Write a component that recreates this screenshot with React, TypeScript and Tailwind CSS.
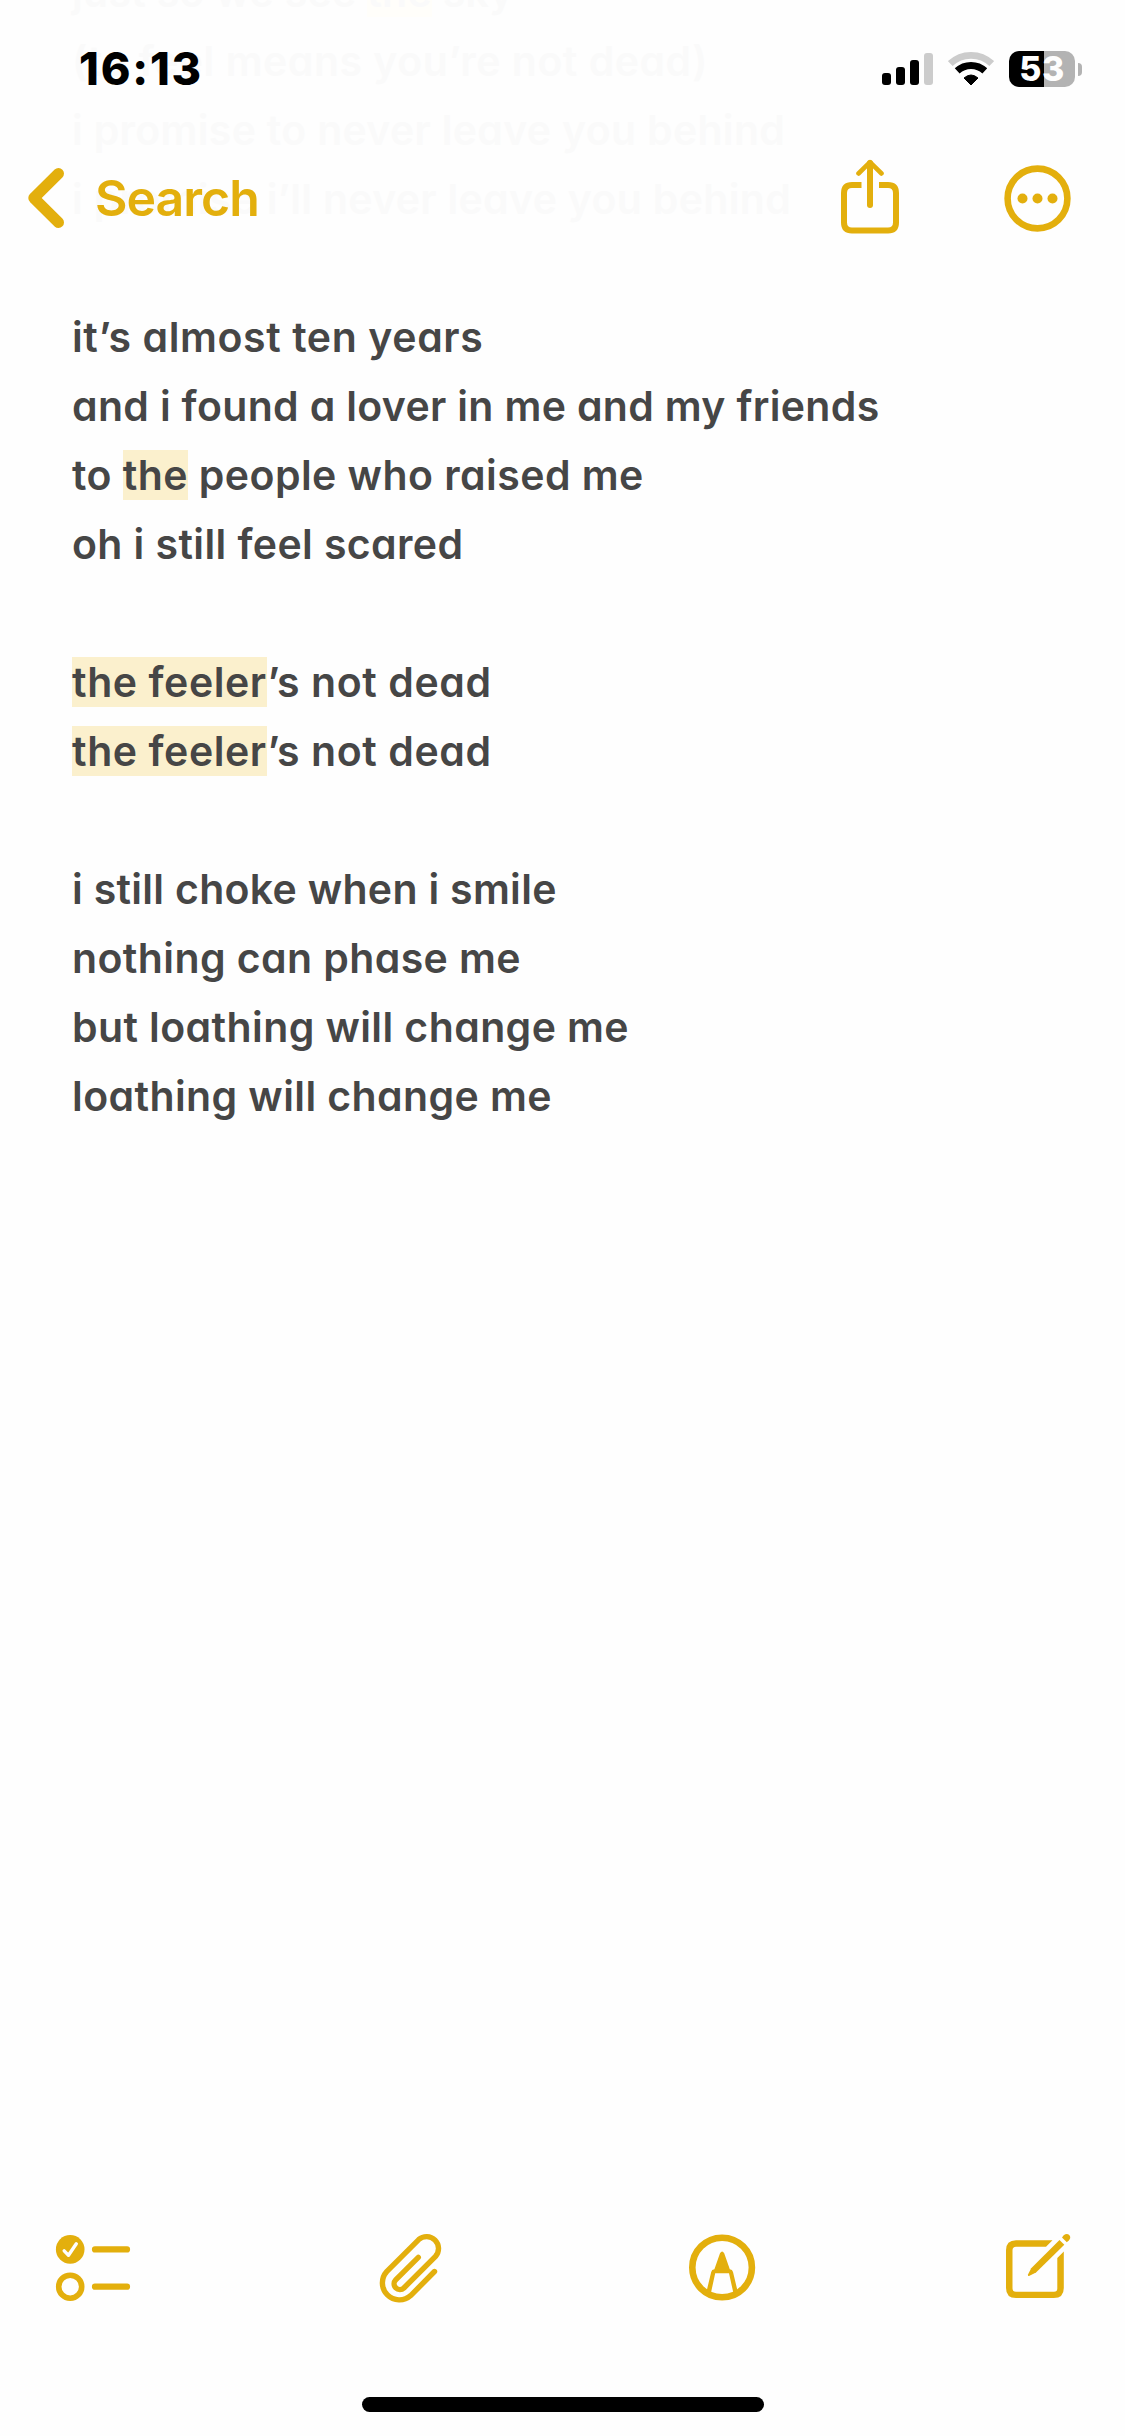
import type { ReactNode } from "react";
import { clsx } from "clsx";

type Segment = string | { mark: string };

type Line = {
  segments: Segment[];
  faded?: boolean;
  tracking?: string;
};

const LINES: Line[] = [
  { segments: ["just so we see ", { mark: "the" }, " sky"], faded: true, tracking: "tracking-[0.3px]" },
  { segments: ["(to feel means you’re not dead)"], faded: true, tracking: "tracking-[0.5px]" },
  { segments: ["i promise to never leave you behind"], faded: true, tracking: "tracking-[0.31px]" },
  { segments: ["i promise i’ll never leave you behind"], faded: true, tracking: "tracking-[0.31px]" },
  { segments: [] },
  { segments: ["it’s almost ten years"], tracking: "tracking-[0.6px]" },
  { segments: ["and i found a lover in me and my friends"], tracking: "tracking-[0.33px]" },
  { segments: ["to ", { mark: "the" }, " people who raised me"], tracking: "tracking-[0.45px]" },
  { segments: ["oh i still feel scared"] },
  { segments: [] },
  { segments: [{ mark: "the feeler" }, "’s not dead"], tracking: "tracking-[0.58px]" },
  { segments: [{ mark: "the feeler" }, "’s not dead"], tracking: "tracking-[0.58px]" },
  { segments: [] },
  { segments: ["i still choke when i smile"], tracking: "tracking-[0.3px]" },
  { segments: ["nothing can phase me"] },
  { segments: ["but loathing will change me"] },
  { segments: ["loathing will change me"] },
];

function NoteLine({ segments, faded, tracking }: Line) {
  return (
    <p
      className={clsx(
        "h-[69px] whitespace-pre",
        faded ? "text-[#fafafa]" : "text-[#464646]",
        tracking ?? "tracking-[0.4px]"
      )}
    >
      {segments.map((s, i) =>
        typeof s === "string" ? (
          <span key={i}>{s}</span>
        ) : (
          <mark key={i} className={clsx("text-inherit", faded ? "bg-[#fffefa]" : "bg-[#fbf0cd]")}>
            {s.mark}
          </mark>
        )
      )}
    </p>
  );
}

function StatusBar() {
  return (
    <div className="flex h-[138px] items-start justify-between pt-[42px] pr-[43px] pl-[79px]">
      <span className="text-[45px] leading-[54px] font-extrabold tracking-[1.8px] text-black">16:13</span>
      <div className="flex pt-[9px]">
        <svg width="51" height="36" viewBox="0 0 51 36" aria-label="Signal">
          <rect x="0" y="22" width="9" height="12" rx="3" />
          <rect x="14" y="16" width="9" height="18" rx="3" />
          <rect x="28" y="9" width="9" height="25" rx="3" />
          <rect x="42" y="2" width="9" height="32" rx="3" fill="#ccc" />
        </svg>
        <svg className="ml-[15px]" width="46" height="36" viewBox="0 0 46 36" fill="none" aria-label="Wi-Fi">
          <path d="M2.3 12.6A30 30 0 0 1 43.7 12.6" stroke="#ccc" strokeWidth="6.8" />
          <path d="M9.2 19.9A20 20 0 0 1 36.8 19.9" stroke="#000" strokeWidth="7" />
          <path d="M23 34 16 27Q23 21 30 27Z" fill="#000" stroke="#000" strokeWidth="1" strokeLinejoin="round" />
        </svg>
        <div className="ml-[15px] flex items-center">
          <div className="flex h-9 w-[66px] items-center justify-center rounded-[10px] bg-linear-to-r from-black from-[53%] to-[#b3b3b3] to-[53%] text-[34px] leading-9 font-extrabold tracking-[0.5px] text-[#fefefe]">
            53
          </div>
          <div className="ml-[3px] h-[13px] w-1 rounded-r-full bg-[#b3b3b3]" />
        </div>
      </div>
    </div>
  );
}

function NavBar() {
  return (
    <nav className="flex h-[120px] items-center pr-[54px] pl-7 text-[#e3af0d]">
      <button type="button" className="flex items-center">
        <svg width="36" height="60" viewBox="0 0 36 60" fill="none" stroke="currentColor" strokeWidth="11" strokeLinecap="round" strokeLinejoin="round">
          <path d="M30.5 5.5 5.8 30 30.5 54.5" />
        </svg>
        <span className="ml-[31px] text-[50px] leading-[60px] font-semibold tracking-[-1px]">Search</span>
      </button>
      <button type="button" aria-label="Share" className="-mt-[3px] ml-auto">
        <svg width="58" height="76" viewBox="0 0 58 76" fill="none" stroke="currentColor" strokeWidth="6">
          <path d="M20.5 26H11Q3 26 3 34V63.5Q3 71.5 11 71.5H47Q55 71.5 55 63.5V34Q55 26 47 26H38" />
          <path d="M29 4V46" strokeLinecap="round" />
          <path d="M17.5 14.5 29 3.2 40.5 14.5" strokeWidth="4.6" strokeLinecap="round" strokeLinejoin="round" />
        </svg>
      </button>
      <button type="button" aria-label="More" className="ml-[105px]">
        <svg width="67" height="67" viewBox="0 0 67 67">
          <circle cx="33.5" cy="33.5" r="29.9" fill="none" stroke="currentColor" strokeWidth="6.6" />
          <g fill="currentColor">
            <circle cx="18.5" cy="33.5" r="5" />
            <circle cx="33.5" cy="33.5" r="5" />
            <circle cx="48.5" cy="33.5" r="5" />
          </g>
        </svg>
      </button>
    </nav>
  );
}

function ToolButton({ label, width, children }: { label: string; width: number; children: ReactNode }) {
  return (
    <button type="button" aria-label={label}>
      <svg width={width} height="120" viewBox={`0 0 ${width} 120`} fill="none" stroke="currentColor">
        {children}
      </svg>
    </button>
  );
}

function Toolbar() {
  return (
    <div className="flex gap-[190px] pl-[30px] text-[#e3af0d]">
      <ToolButton label="Checklist" width={130}>
        <circle cx="40.2" cy="39.4" r="14.3" fill="currentColor" stroke="none" />
        <path d="M34.2 40.8 38.5 45.3 46.3 33.8" stroke="#fefefe" strokeWidth="3.4" strokeLinecap="round" strokeLinejoin="round" />
        <circle cx="40.2" cy="76.7" r="11.5" strokeWidth="5.6" />
        <path d="M65 39.4H97M65 76.7H97" strokeWidth="6.2" strokeLinecap="round" />
      </ToolButton>
      <ToolButton label="Attach" width={120}>
        <path
          d="M84.5 61.5 60.7 85.6A17 17 0 0 1 36.7 61.6L68.7 29.6A11.9 11.9 0 0 1 85.5 46.4L53.9 78A5.8 5.8 0 0 1 45.7 69.8L68.3 47.3"
          strokeWidth="5.4"
          strokeLinecap="round"
        />
      </ToolButton>
      <ToolButton label="Markup" width={130}>
        <circle cx="62.1" cy="57.5" r="29.8" strokeWidth="6.6" />
        <path
          d="M60 43.2Q62.1 40 64.2 43.2L69.8 59.2Q72.5 59.5 73 62L77.8 82 73.5 83.5 69 63.3H55.2L50.8 83.5 46.4 82 51.2 62Q51.7 59.5 54.4 59.2Z"
          fill="currentColor"
          stroke="none"
        />
      </ToolButton>
      <ToolButton label="Compose" width={130}>
        <g fill="currentColor" stroke="none">
          <path d="M72.5 30.3H36Q26 30.3 26 40.3V78Q26 88 36 88H73.8Q83.8 88 83.8 78V41.5L77.3 48V78.5Q77.3 81.7 74 81.7H36Q32.5 81.7 32.5 78.2V40.3Q32.5 36.8 36 36.8H66Z" />
          <path d="M79.5 29.9 84.3 34.7 56 62.5 49 66.1Q47.5 66.3 48 64.6L51.2 58.2Z" />
          <path d="M82 27.4 83.7 25.3Q86.8 22.7 89.2 25Q91.5 27.5 88.8 30.5L86.8 32.2Z" />
        </g>
      </ToolButton>
    </div>
  );
}

export default function App() {
  return (
    <main className="relative flex h-[2436px] w-[1125px] flex-col overflow-hidden bg-[#fefefe] font-['Inter',sans-serif]">
      <header className="absolute inset-x-0 top-0 z-10">
        <StatusBar />
        <NavBar />
      </header>

      {/* scrolled so the first lines run under the header */}
      <article className="-mt-[42px] pl-[72px] text-[41px] leading-[69px] font-semibold [font-feature-settings:'cv11']">
        {LINES.map((line, i) => (
          <NoteLine key={i} {...line} />
        ))}
      </article>

      <footer className="mt-auto flex h-[226px] flex-col">
        <Toolbar />
        <div className="mx-auto mt-[67px] h-[15px] w-[402px] rounded-full bg-black" />
      </footer>
    </main>
  );
}
